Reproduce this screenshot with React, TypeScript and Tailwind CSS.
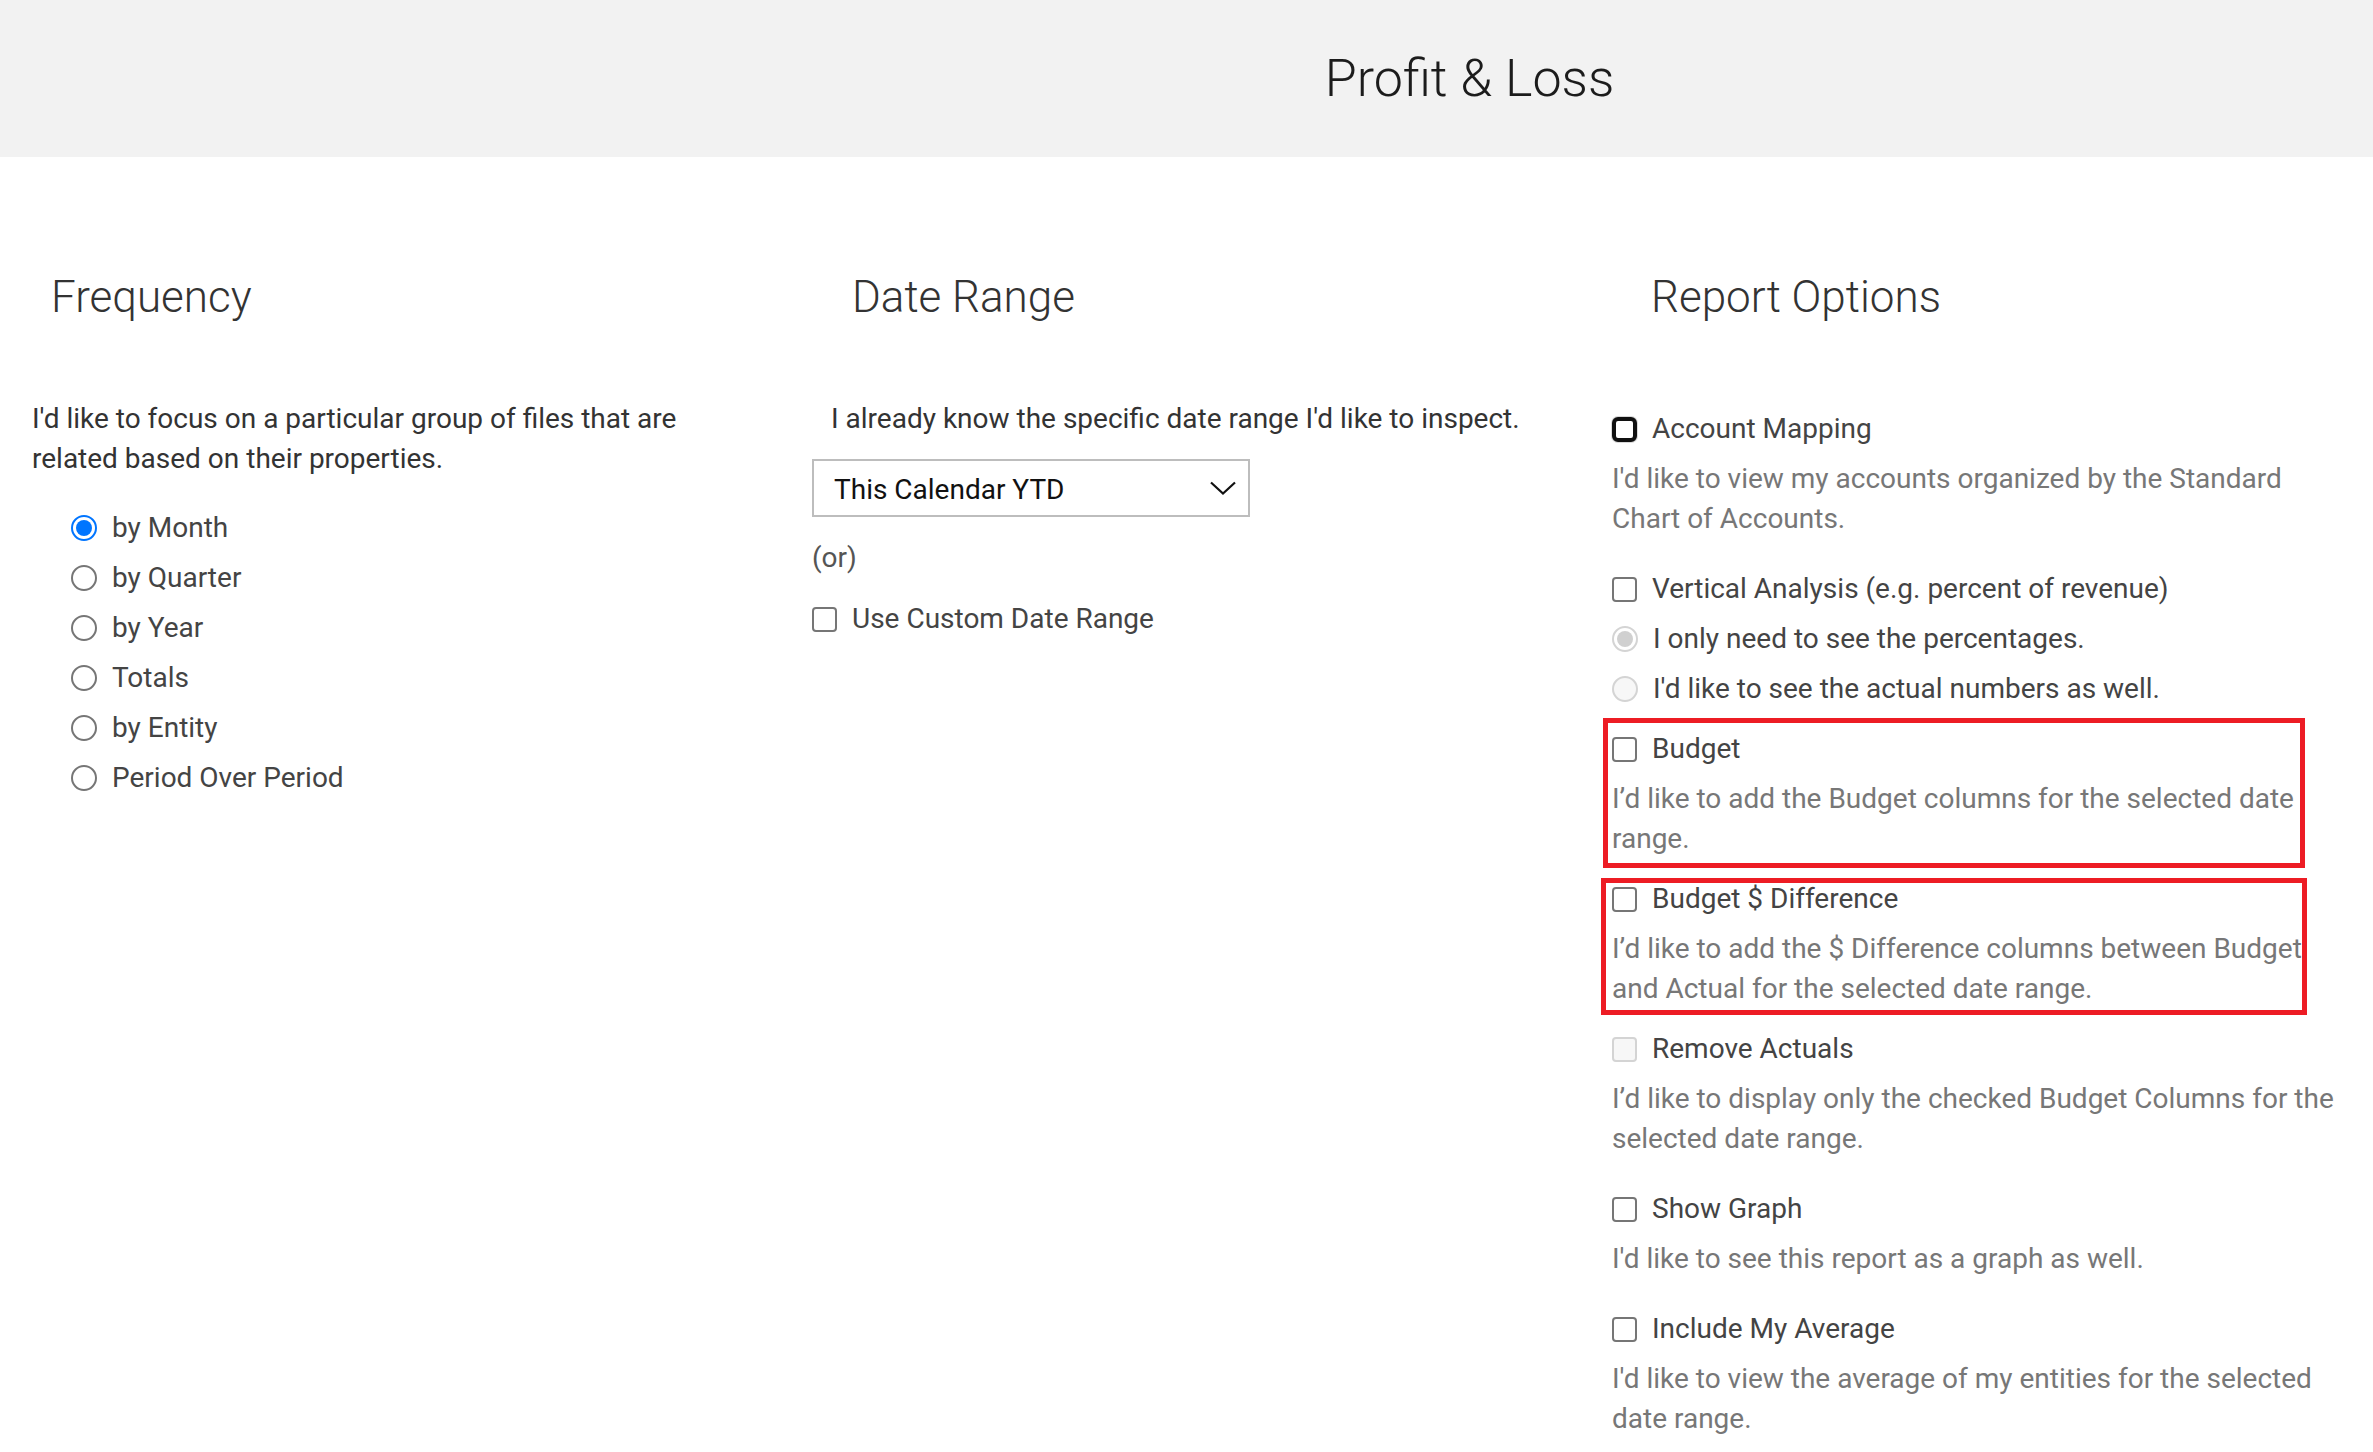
import React from "react";

function Radio({ checked, disabled }: { checked?: boolean; disabled?: boolean }) {
  if (checked && !disabled) {
    return (
      <span className="flex h-[26px] w-[26px] shrink-0 items-center justify-center rounded-full border-[2px] border-[#0075ff] bg-white">
        <span className="h-[16px] w-[16px] rounded-full bg-[#0075ff]" />
      </span>
    );
  }
  if (checked && disabled) {
    return (
      <span className="flex h-[26px] w-[26px] shrink-0 items-center justify-center rounded-full border-[2px] border-[#d4d4d4] bg-white">
        <span className="h-[16px] w-[16px] rounded-full bg-[#d0d0d0]" />
      </span>
    );
  }
  if (disabled) {
    return <span className="h-[26px] w-[26px] shrink-0 rounded-full border-[2px] border-[#d4d4d4] bg-[#f7f7f7]" />;
  }
  return <span className="h-[26px] w-[26px] shrink-0 rounded-full border-[2px] border-[#767676] bg-white" />;
}

function Checkbox({ focused, disabled }: { focused?: boolean; disabled?: boolean }) {
  if (focused) {
    return (
      <span className="h-[25px] w-[25px] shrink-0 rounded-[6px] border-[4px] border-[#101010] bg-white ring-1 ring-[#d8d8d8]" />
    );
  }
  if (disabled) {
    return <span className="h-[25px] w-[25px] shrink-0 rounded-[4px] border-[2px] border-[#d4d4d4] bg-[#f7f7f7]" />;
  }
  return <span className="h-[25px] w-[25px] shrink-0 rounded-[4px] border-[2px] border-[#767676] bg-white" />;
}

function FreqOption({ label, checked }: { label: string; checked?: boolean }) {
  return (
    <label className="flex h-[50px] items-center gap-[15px] text-[#444]">
      <Radio checked={checked} />
      <span>{label}</span>
    </label>
  );
}

function OptionRow({ children, box }: { children: React.ReactNode; box: React.ReactNode }) {
  return (
    <label className="mb-[10px] flex h-[40px] items-center gap-[15px] text-[#444]">
      {box}
      <span>{children}</span>
    </label>
  );
}

interface ReportOptionProps {
  label: string;
  desc?: string;
  focused?: boolean;
  disabled?: boolean;
  className?: string;
  children?: React.ReactNode;
}

function ReportOption({ label, desc, focused, disabled, className, children }: ReportOptionProps) {
  return (
    <div className={className}>
      <OptionRow box={<Checkbox focused={focused} disabled={disabled} />}>{label}</OptionRow>
      {desc && <p className="text-[#777]">{desc}</p>}
      {children}
    </div>
  );
}

export default function App() {
  return (
    <div className="min-h-[1452px] bg-white text-[28px] leading-[40px] text-[#333]" style={{ fontFamily: "Roboto, 'Noto Sans', sans-serif" }}>
      <header className="flex h-[157px] justify-center bg-[#f2f2f2] pl-[566px]">
        <h1 className="mt-[52px] text-[52px] font-light leading-[53px] text-[#1c1c1c]">Profit &amp; Loss</h1>
      </header>

      <main className="grid grid-cols-3">
        {/* Frequency */}
        <section className="pl-[32px] pr-[30px]">
          <h2 className="ml-[19px] mt-[118px] text-[44px] font-light leading-[45px] text-[#333]">Frequency</h2>
          <p className="mt-[79px] text-[#333]">
            I'd like to focus on a particular group of files that are related based on their properties.
          </p>
          <div className="ml-[39px] mt-[24px]">
            <FreqOption label="by Month" checked />
            <FreqOption label="by Quarter" />
            <FreqOption label="by Year" />
            <FreqOption label="Totals" />
            <FreqOption label="by Entity" />
            <FreqOption label="Period Over Period" />
          </div>
        </section>

        {/* Date Range */}
        <section className="pl-[21px] pr-[30px]">
          <h2 className="ml-[40px] mt-[118px] text-[44px] font-light leading-[45px] text-[#333]">Date Range</h2>
          <p className="ml-[19px] mt-[79px] text-[#333]">I already know the specific date range I'd like to inspect.</p>
          <div className="mt-[20px] flex h-[58px] w-[438px] items-center justify-between border-[2px] border-[#bdbdbd] pl-[20px] pr-[12px] text-[#111]">
            <span className="pt-[4px]">This Calendar YTD</span>
            <svg width="26" height="14" viewBox="0 0 26 14" fill="none" stroke="#111" strokeWidth="2.2">
              <polyline points="1,1.5 13,12.5 25,1.5" />
            </svg>
          </div>
          <p className="mt-[21px] text-[#555]">(or)</p>
          <label className="mt-[21px] flex h-[40px] items-center gap-[15px] text-[#444]">
            <Checkbox />
            <span>Use Custom Date Range</span>
          </label>
        </section>

        {/* Report Options */}
        <section className="pl-[30px] pr-[26px]">
          <h2 className="ml-[39px] mt-[118px] text-[44px] font-light leading-[45px] text-[#333]">Report Options</h2>
          <div className="mt-[89px]">
            <ReportOption
              className="mb-[30px]"
              label="Account Mapping"
              focused
              desc="I'd like to view my accounts organized by the Standard Chart of Accounts."
            />
            <ReportOption className="mb-[20px]" label="Vertical Analysis (e.g. percent of revenue)">
              <OptionRow box={<Radio checked disabled />}>I only need to see the percentages.</OptionRow>
              <OptionRow box={<Radio disabled />}>I'd like to see the actual numbers as well.</OptionRow>
            </ReportOption>
            <div className="relative mb-[20px]">
              <span className="pointer-events-none absolute -left-[9px] -top-[11px] h-[150px] w-[702px] border-[5px] border-[#ed1c24]" />
              <ReportOption
                label="Budget"
                desc="I’d like to add the Budget columns for the selected date range."
              />
            </div>
            <div className="relative mb-[20px]">
              <span className="pointer-events-none absolute -left-[11px] -top-[1px] h-[137px] w-[706px] border-[5px] border-[#ed1c24]" />
              <ReportOption
                label="Budget $ Difference"
                desc="I’d like to add the $ Difference columns between Budget and Actual for the selected date range."
              />
            </div>
            <ReportOption
              className="mb-[30px]"
              label="Remove Actuals"
              disabled
              desc="I’d like to display only the checked Budget Columns for the selected date range."
            />
            <ReportOption
              className="mb-[30px]"
              label="Show Graph"
              desc="I'd like to see this report as a graph as well."
            />
            <ReportOption
              label="Include My Average"
              desc="I'd like to view the average of my entities for the selected date range."
            />
          </div>
        </section>
      </main>
    </div>
  );
}
